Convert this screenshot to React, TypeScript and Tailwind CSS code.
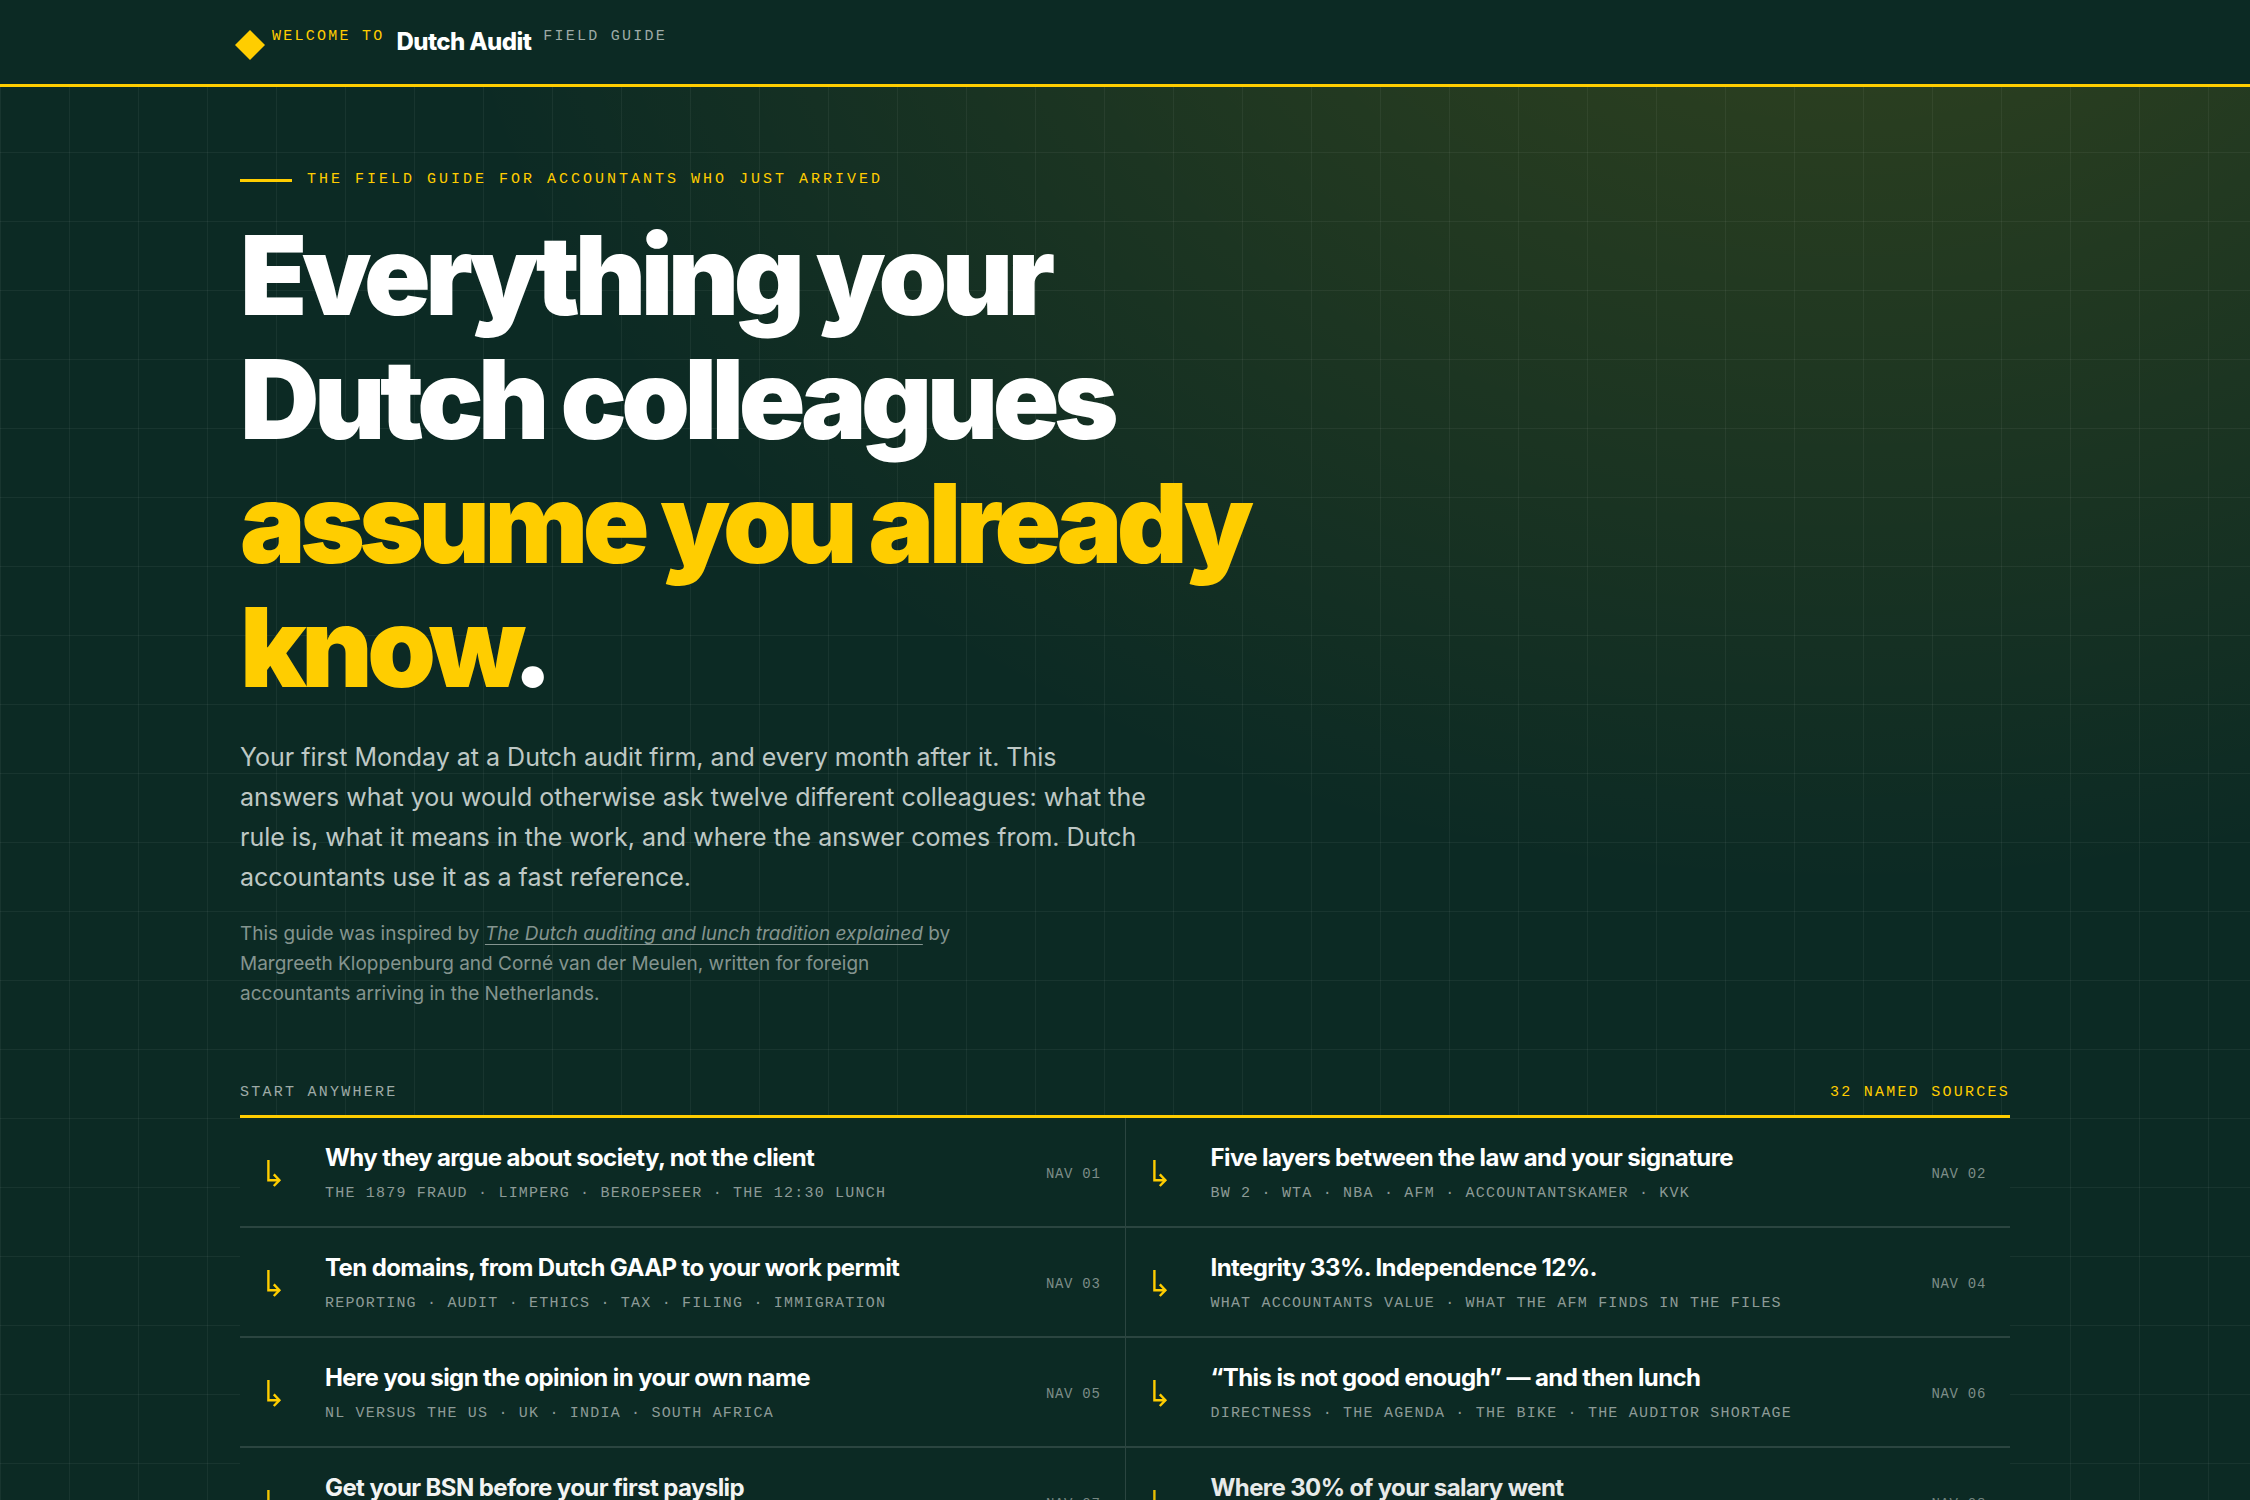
const DISPLAY = "font-['Inter',sans-serif]";
const MONO = "font-['Liberation_Mono',monospace]";

const navItems = [
  { nav: "NAV 01", title: "Why they argue about society, not the client", topics: "THE 1879 FRAUD · LIMPERG · BEROEPSEER · THE 12:30 LUNCH", fade: "" },
  { nav: "NAV 02", title: "Five layers between the law and your signature", topics: "BW 2 · WTA · NBA · AFM · ACCOUNTANTSKAMER · KVK", fade: "" },
  { nav: "NAV 03", title: "Ten domains, from Dutch GAAP to your work permit", topics: "REPORTING · AUDIT · ETHICS · TAX · FILING · IMMIGRATION", fade: "" },
  { nav: "NAV 04", title: "Integrity 33%. Independence 12%.", topics: "WHAT ACCOUNTANTS VALUE · WHAT THE AFM FINDS IN THE FILES", fade: "" },
  { nav: "NAV 05", title: "Here you sign the opinion in your own name", topics: "NL VERSUS THE US · UK · INDIA · SOUTH AFRICA", fade: "" },
  { nav: "NAV 06", title: "“This is not good enough” — and then lunch", topics: "DIRECTNESS · THE AGENDA · THE BIKE · THE AUDITOR SHORTAGE", fade: "" },
  { nav: "NAV 07", title: "Get your BSN before your first payslip", topics: "", fade: "opacity-95" },
  { nav: "NAV 08", title: "Where 30% of your salary went", topics: "", fade: "opacity-90" },
];

function ArrowIcon() {
  return (
    <svg viewBox="0 0 18 28" className="w-[18px] h-7" fill="none" stroke="#ffcd00" strokeWidth="2.4" aria-hidden="true">
      <path d="M4.4 0v20.2h11" />
      <path d="M9.8 14.4l5.6 5.8-5.6 5.8" />
    </svg>
  );
}

function NavCard({ nav, title, topics, fade }: { nav: string; title: string; topics: string; fade: string }) {
  return (
    <div className="bg-[#0c2a24]">
      <a href="#" className={`flex items-center h-full px-6 pt-6 pb-5 ${fade}`}>
        <span className="w-[61px] shrink-0">
          <ArrowIcon />
        </span>
        <span className="flex-1 min-w-0">
          <span className={`block text-[24px] leading-[32px] font-bold tracking-tight text-white ${DISPLAY}`}>{title}</span>
          <span className={`block mt-2 min-h-6 text-[15px] leading-[24px] tracking-[0.08em] text-[#8d9b97] ${MONO}`}>{topics}</span>
        </span>
        <span className={`shrink-0 text-[14px] leading-[24px] tracking-[0.05em] text-[#7d8d88] ${MONO}`}>{nav}</span>
      </a>
    </div>
  );
}

export default function App() {
  return (
    <div className="h-screen overflow-hidden bg-[#0c2a24] flex flex-col">
      <header className="shrink-0 border-b-3 border-[#ffcd00] px-8">
        <div className="max-w-[1770px] mx-auto h-[84px] flex items-center">
          <a href="#" className="flex items-start gap-3">
            <svg viewBox="0 0 30 30" className="w-[30px] h-[30px] -mx-[5px] self-end" aria-hidden="true">
              <path d="M15 0L30 15L15 30L0 15z" fill="#ffcd00" />
            </svg>
            <span className={`text-[15px] leading-[26px] tracking-[0.15em] text-[#ffcd00] ${MONO}`}>WELCOME TO</span>
            <span className={`text-[24px] leading-[36px] font-extrabold tracking-tight text-white ${DISPLAY}`}>Dutch Audit</span>
            <span className={`text-[15px] leading-[26px] tracking-[0.15em] text-[#9eaaa7] ${MONO}`}>FIELD GUIDE</span>
          </a>
        </div>
      </header>

      <main className="flex-1 px-8 bg-[linear-gradient(rgba(255,255,255,0.05)_1px,transparent_1px),linear-gradient(90deg,rgba(255,255,255,0.05)_1px,transparent_1px),radial-gradient(1415px_1050px_at_82%_-249px,rgba(255,205,0,0.16),transparent)] bg-[size:69px_69px,69px_69px,auto] bg-[position:0_-4px,0_0,0_0]">
        <div className="max-w-[1770px] mx-auto">
          {/* Hero */}
          <p className={`pt-20 flex items-center gap-[15px] text-[15px] leading-[26px] tracking-[0.2em] text-[#ffcd00] ${MONO}`}>
            <span className="w-[52px] h-[3px] bg-[#ffcd00]" />
            THE FIELD GUIDE FOR ACCOUNTANTS WHO JUST ARRIVED
          </p>
          <h1 className={`mt-5 max-w-[1060px] text-[110px] leading-[124px] font-black tracking-tighter text-white ${DISPLAY}`}>
            Everything your Dutch colleagues <span className="text-[#ffcd00]">assume you already know</span>.
          </h1>
          <p className="mt-7 max-w-[920px] text-[25px] leading-[40px] text-[#bec8c5] font-['Inter',sans-serif]">
            Your first Monday at a Dutch audit firm, and every month after it. This answers what you would otherwise ask twelve different colleagues: what the rule is, what it means in the work, and where the answer comes from. Dutch accountants use it as a fast reference.
          </p>
          <p className="mt-[22px] max-w-[720px] text-[19px] leading-[30px] text-[#84948f] font-['Inter',sans-serif]">
            This guide was inspired by{" "}
            <a href="#" className="italic underline underline-offset-4">The Dutch auditing and lunch tradition explained</a> by Margreeth Kloppenburg and Corné van der Meulen, written for foreign accountants arriving in the Netherlands.
          </p>

          {/* Index */}
          <div className={`mt-[72px] pb-[10px] flex justify-between text-[15px] leading-[24px] tracking-[0.15em] border-b-3 border-[#ffcd00] ${MONO}`}>
            <span className="text-[#9eaaa7]">START ANYWHERE</span>
            <span className="text-[#ffcd00]">32 NAMED SOURCES</span>
          </div>
          <nav className="grid grid-cols-2 gap-x-px gap-y-[2px] bg-[#2b4540]">
            {navItems.map((item) => (
              <NavCard key={item.nav} {...item} />
            ))}
          </nav>
        </div>
      </main>
    </div>
  );
}
